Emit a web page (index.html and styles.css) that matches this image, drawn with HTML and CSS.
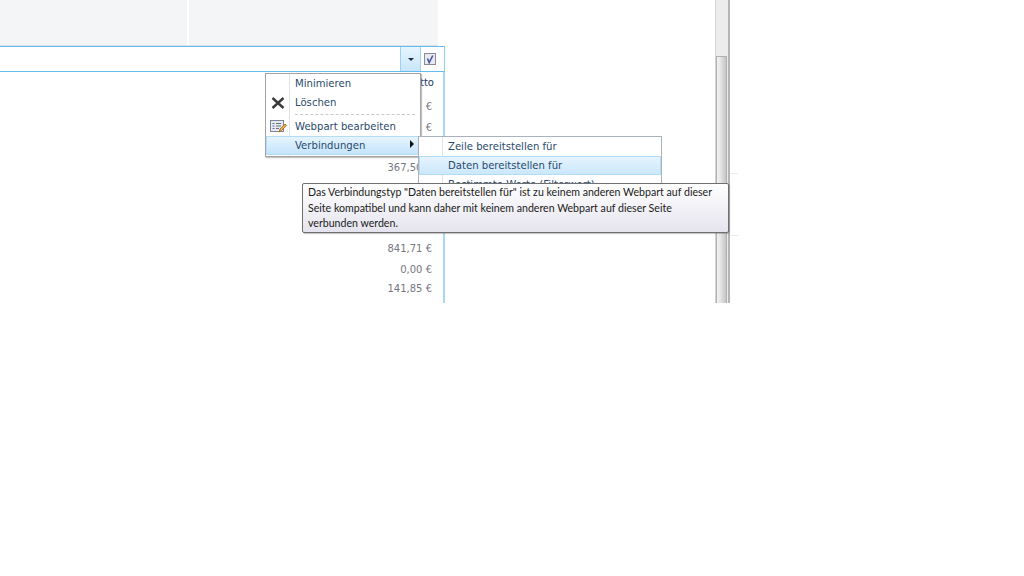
FILE: index.html
```html
<!DOCTYPE html>
<html lang="de">
<head>
<meta charset="utf-8">
<title>Webpart</title>
<link rel="stylesheet" href="styles.css">
</head>
<body>
<div class="screen">
  <main class="pane">
    <div class="topstrip"><div class="tile tile-a"></div><div class="tile tile-b"></div></div>
    <section class="webpart">
      <header class="wp-head">
        <div class="wp-title"></div>
        <div class="wp-drop"><span class="caret"></span></div>
        <div class="wp-check">
          <svg width="12" height="12" viewBox="0 0 12 12"><rect x="0.5" y="0.5" width="11" height="11" fill="#e6e8f2" stroke="#8b8b96"/><path d="M3.500 5.500 L5.200 9.500 L8.800 2.500" fill="none" stroke="#4a5a9c" stroke-width="1.6"/></svg>
        </div>
      </header>
      <div class="wp-body">
        <div class="col-head">tto</div>
        <div class="cell c1">€</div>
        <div class="cell c2">€</div>
        <div class="cell c3">367,50 €</div>
        <div class="cell c4">841,71 €</div>
        <div class="cell c5">0,00 €</div>
        <div class="cell c6">141,85 €</div>
      </div>
    </section>
  </main>
  <div class="scrollbar"><div class="thumb"></div></div>
  <div class="edge"><span class="tick t1"></span><span class="tick t2"></span></div>

  <nav class="menu">
    <div class="mi"><span class="mi-ic"></span><span class="mi-tx">Minimieren</span></div>
    <div class="mi"><span class="mi-ic"><svg width="14" height="14" viewBox="0 0 14 14"><path d="M1.500 2 L12.500 12 M12.500 2 L1.500 12" stroke="#3a3a3a" stroke-width="2.4"/></svg></span><span class="mi-tx">Löschen</span></div>
    <div class="msep"></div>
    <div class="mi"><span class="mi-ic"><svg width="17" height="15" viewBox="0 0 17 15"><rect x="0.5" y="1.5" width="13" height="11" fill="#e4e8f0" stroke="#7f8796"/><path d="M2.500 4.500h2M6 4.500h5M2.500 7h2M6 7h5M2.500 9.500h2M6 9.500h3" stroke="#69728a"/><path d="M9 13 L10 10 L15 5 L16.500 6.500 L11.500 11.500 Z" fill="#e9b13f" stroke="#a8641e" stroke-width=".8"/></svg></span><span class="mi-tx">Webpart bearbeiten</span></div>
    <div class="mi mi-on"><span class="mi-ic"></span><span class="mi-tx">Verbindungen</span><span class="arrow"></span></div>
  </nav>

  <nav class="submenu">
    <div class="si"><span class="si-tx">Zeile bereitstellen für</span></div>
    <div class="si si-on"><span class="si-tx">Daten bereitstellen für</span></div>
    <div class="si"><span class="si-tx">Bestimmte Werte (Filterwert)</span></div>
  </nav>

  <div class="tooltip">Das Verbindungstyp "Daten bereitstellen für" ist zu keinem anderen Webpart auf dieser Seite kompatibel und kann daher mit keinem anderen Webpart auf dieser Seite verbunden werden.</div>
</div>
</body>
</html>
```
FILE: styles.css
```css
* { box-sizing: border-box; }
html, body { margin: 0; padding: 0; background: #fff; }
body { font-family: "DejaVu Sans", Verdana, sans-serif; font-size: 10px; overflow: hidden; }
.screen { position: relative; width: 1024px; height: 576px; display: flex; align-items: flex-start; overflow: hidden; }

.pane { width: 715px; height: 303px; flex: none; }
.topstrip { display: flex; gap: 2px; width: 438px; height: 46px; border-bottom: 1px solid #dfe3e8; }
.tile { background: #f4f5f7; height: 45px; }
.tile-a { width: 187px; }
.tile-b { width: 249px; }

.webpart { width: 445px; }
.wp-head { display: flex; height: 26px; border-top: 1px solid #63bcee; border-bottom: 1px solid #63bcee; border-right: 1px solid #8fcef3; }
.wp-title { flex: 1; }
.wp-drop { width: 21px; background: linear-gradient(#e6f4fd, #c9e6fa); border-left: 1px solid #9fd2f2; border-right: 1px solid #9fd2f2; display: flex; align-items: center; justify-content: center; }
.caret { width: 0; height: 0; border: 3px solid transparent; border-top: 3px solid #1f2d4d; border-bottom: 0; }
.wp-check { width: 23px; padding-left: 3px; display: flex; align-items: center; justify-content: flex-start; }

.wp-body { height: 231px; border-right: 2px solid #a6d8f6; color: #77777f; width: 445px; display: flex; flex-direction: column; align-items: flex-end; }
.col-head { color: #1e3a5c; margin-top: 4px; height: 14px; line-height: 14px; padding-right: 9px; }
.cell { height: 20px; line-height: 20px; padding-right: 11px; white-space: nowrap; }
.c1 { margin-top: 7px; }
.c2 { margin-top: 1px; }
.c3 { margin-top: 20px; }
.c4 { margin-top: 61px; }
.c5 { margin-top: 1px; }
.c6 { margin-top: -1px; }

.scrollbar { width: 15px; height: 303px; flex: none; background: #ececec; border-left: 1px solid #d4d4d4; border-right: 2px solid #b4b4b4; padding-top: 56px; }
.thumb { height: 247px; margin: 0 1px 0 0; background: linear-gradient(90deg, #f4f4f4, #e4e4e4 40%, #d4d4d4 70%, #c6c6c6); border: 1px solid #b0b0b0; border-bottom: 0; }
.edge { width: 8px; height: 303px; flex: none; position: relative; }
.tick { position: absolute; left: 0; width: 8px; height: 1px; background: #ececec; }
.t1 { top: 173px; }
.t2 { top: 235px; }

.menu { position: absolute; left: 265px; top: 73px; width: 156px; height: 84px; background: #fff; border: 1px solid #a3a3a8; box-shadow: 1px 1px 1px rgba(120,120,120,.45); color: #2a4a6c; font-size: 10.1px; }
.menu::before { content: ""; position: absolute; left: 23px; top: 0; bottom: 0; width: 1px; background: #e2e3e4; }
.mi { display: flex; align-items: center; height: 19px; position: relative; }
.mi-ic { width: 24px; flex: none; display: flex; justify-content: center; align-items: center; }
.mi-tx { margin-left: 5px; white-space: nowrap; }
.msep { height: 0; margin: 2px 5px 2px 29px; border-top: 1px dashed #c8c8c8; }
.mi-on { background: linear-gradient(#e6f4fe, #c4e4fb); border: 1px solid #b5dcf6; }
.mi-on .mi-ic { width: 23px; }
.arrow { position: absolute; right: 5px; top: 3px; width: 0; height: 0; border: 4px solid transparent; border-left: 4px solid #111; border-right: 0; }

.submenu { position: absolute; left: 418px; top: 136px; width: 244px; height: 70px; background: #fff; border: 1px solid #a9b3bd; color: #2a4a6c; font-size: 10.1px; }
.submenu::before { content: ""; position: absolute; left: 23px; top: 0; bottom: 0; width: 1px; background: #e2e3e4; }
.si { height: 19px; display: flex; align-items: center; position: relative; padding-left: 29px; white-space: nowrap; }
.si-on { background: linear-gradient(#e6f4fe, #cbe7fb); border: 1px solid #b5dcf6; padding-left: 28px; }

.tooltip { position: absolute; left: 302px; top: 183px; width: 427px; height: 50px; padding: 1px 8px 1px 5px; background: linear-gradient(#ffffff, #e5e4ee); border: 1px solid #6f6f6f; border-radius: 2px; box-shadow: 1px 1px 1px rgba(100,100,100,.4); color: #1a1a1a; font-family: Lato, "Open Sans", sans-serif; font-size: 10.6px; line-height: 15.500px; }
```
